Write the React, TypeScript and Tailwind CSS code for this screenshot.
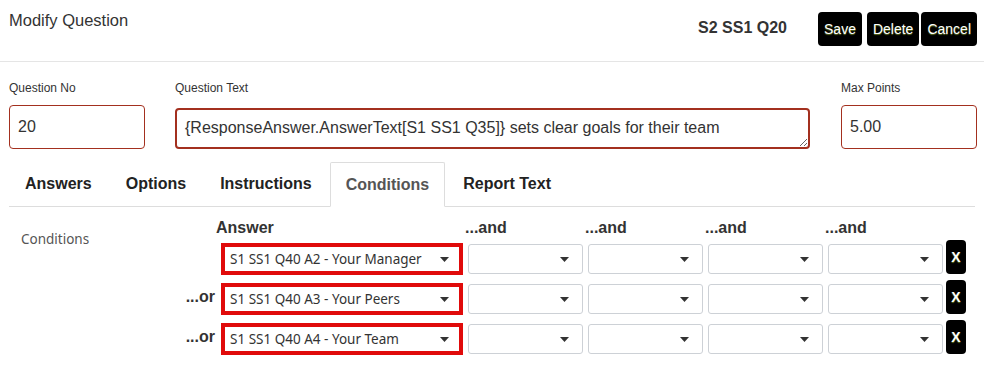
import React from "react";

const arial = { fontFamily: '"Liberation Sans", Arial, sans-serif' };

function Caret() {
  return (
    <svg width="9" height="5" viewBox="0 0 9 5" className="shrink-0">
      <path d="M0 0 L9 0 L4.5 5 Z" fill="#333" />
    </svg>
  );
}

function RedSelect({ text }: { text: string }) {
  return (
    <div className="ml-[5px] mt-[3px] h-[32px] w-[242px] border-4 border-[#e00a0a] bg-white flex items-center justify-between pl-[5px] pr-[10px]">
      <span className="text-[13.5px] text-[#333] whitespace-nowrap" style={{ fontFamily: '"Noto Sans", sans-serif' }}>
        {text}
      </span>
      <Caret />
    </div>
  );
}

function GraySelect() {
  return (
    <div className="ml-[4px] mt-[4px] h-[30px] w-[115px] border border-[#cdd1d6] rounded-[3px] bg-white flex items-center justify-end pr-[13px]">
      <Caret />
    </div>
  );
}

function XBtn() {
  return (
    <div className="ml-[2px] h-[34px] w-[20px] bg-black rounded-[4px] flex items-center justify-center">
      <span className="text-[14px] font-bold text-white [text-shadow:0_1px_1px_#5f7420]" style={arial}>
        X
      </span>
    </div>
  );
}

function Btn({ label }: { label: string }) {
  return (
    <div className="h-[34px] px-[6px] bg-black rounded-[4px] flex items-center">
      <span className="text-[14px] text-white [text-shadow:0_1px_1px_#5f7420]" style={arial}>
        {label}
      </span>
    </div>
  );
}

const rows = [
  { or: false, text: "S1 SS1 Q40 A2 - Your Manager" },
  { or: true, text: "S1 SS1 Q40 A3 - Your Peers" },
  { or: true, text: "S1 SS1 Q40 A4 - Your Team" },
];

export default function App() {
  return (
    <div className="w-[984px] h-[366px] bg-white overflow-hidden text-[#333]" style={arial}>
      {/* header */}
      <div className="h-[62px] border-b border-[#e5e5e5] flex justify-between pl-[9px] pr-[7px]">
        <div className="pt-[8px] text-[16.5px] text-[#333]">Modify Question</div>
        <div className="flex items-start">
          <div className="mt-[16px] mr-[31px] text-[16px] font-bold text-[#333]">S2 SS1 Q20</div>
          <div className="mt-[12px] flex gap-[2px]">
            <Btn label="Save" />
            <div className="w-[1px]" />
            <Btn label="Delete" />
            <Btn label="Cancel" />
          </div>
        </div>
      </div>

      {/* fields */}
      <div className="flex px-[9px] pt-[18px]">
        <div className="w-[136px] flex flex-col">
          <div className="text-[12px] leading-[17px] mb-[8px] text-[#333]">Question No</div>
          <input
            readOnly
            value="20"
            className="h-[44px] w-[136px] border border-[#a3301f] rounded-[4px] px-[8px] text-[16px] text-[#333] outline-none"
            style={arial}
          />
        </div>
        <div className="ml-[30px] w-[635px] flex flex-col">
          <div className="text-[12px] leading-[17px] mb-[8px] text-[#333]">Question Text</div>
          <textarea
            readOnly
            value="{ResponseAnswer.AnswerText[S1 SS1 Q35]} sets clear goals for their team"
            className="mt-[3px] h-[41px] w-[635px] border-2 border-[#a3301f] rounded-[4px] px-[8px] pt-[7px] text-[16px] leading-[22px] text-[#333] outline-none overflow-hidden"
            style={arial}
          />
        </div>
        <div className="ml-[31px] w-[136px] flex flex-col">
          <div className="text-[12px] leading-[17px] mb-[8px] text-[#333]">Max Points</div>
          <input
            readOnly
            value="5.00"
            className="h-[44px] w-[136px] border border-[#a3301f] rounded-[4px] px-[8px] text-[16px] text-[#333] outline-none"
            style={arial}
          />
        </div>
      </div>

      {/* tabs */}
      <div className="mx-[9px] mt-[13px] flex border-b border-[#dddddd] h-[45px]">
        {["Answers", "Options", "Instructions", "Conditions", "Report Text"].map((t) => {
          const active = t === "Conditions";
          return (
            <div
              key={t}
              className={
                active
                  ? "mr-[2px] -mb-[1px] px-[15px] border border-[#dddddd] border-b-white bg-white rounded-t-[2px] flex items-center text-[16px] font-bold text-[#555]"
                  : "mr-[2px] px-[16px] flex items-center text-[16px] font-bold text-[#222]"
              }
            >
              {t}
            </div>
          );
        })}
      </div>

      {/* conditions */}
      <div className="flex pt-[10px]">
        <div className="w-[170px] pl-[21px] pt-[10px]">
          <span className="text-[13.5px] text-[#555]" style={{ fontFamily: '"Noto Sans", sans-serif' }}>
            Conditions
          </span>
        </div>
        <div className="grid grid-cols-[46px_248px_120px_120px_120px_120px_30px] auto-rows-min">
          <div />
          <div className="h-[22px] leading-[22px] text-[16px] font-bold text-[#333]">Answer</div>
          {[0, 1, 2, 3].map((i) => (
            <div key={i} className="h-[22px] leading-[22px] text-[16px] font-bold text-[#333] pl-[1px]">
              ...and
            </div>
          ))}
          <div />
          {rows.map((r, idx) => (
            <React.Fragment key={idx}>
              <div className={"h-[34px] flex items-center justify-end pr-[1px] text-[16px] font-bold text-[#333] " + (idx === 0 ? "mt-[1px]" : "mt-[5px]")}>
                {r.or ? "...or" : ""}
              </div>
              <div className={idx === 0 ? "mt-[1px]" : "mt-[5px]"}>
                <RedSelect text={r.text} />
              </div>
              {[0, 1, 2, 3].map((i) => (
                <div key={i} className={idx === 0 ? "mt-[1px]" : "mt-[5px]"}>
                  <GraySelect />
                </div>
              ))}
              <div className={idx === 0 ? "mt-[1px]" : "mt-[5px]"}>
                <XBtn />
              </div>
            </React.Fragment>
          ))}
        </div>
      </div>
    </div>
  );
}
